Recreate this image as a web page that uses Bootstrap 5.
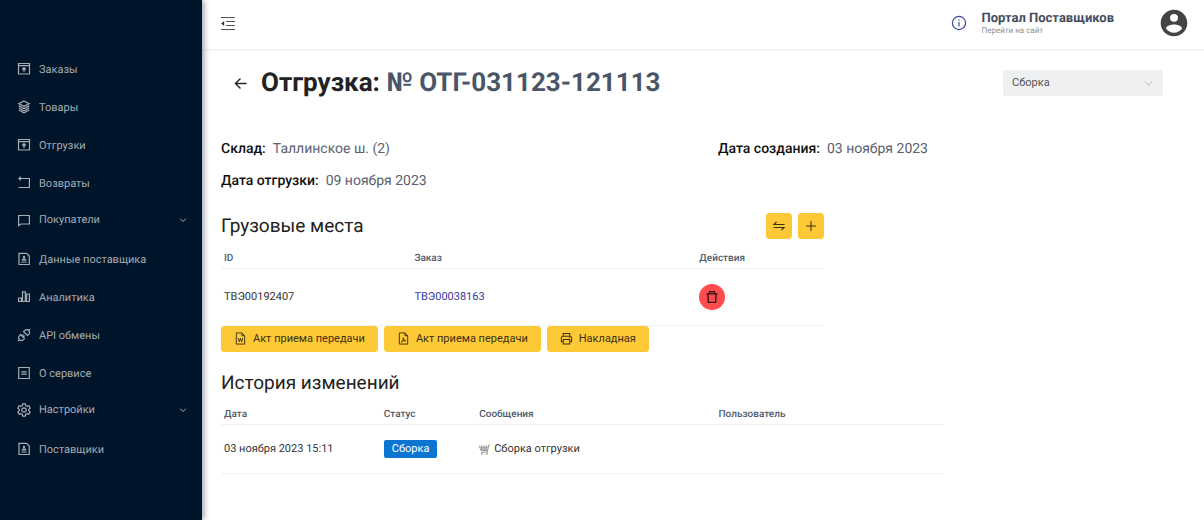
<!DOCTYPE html>
<html lang="ru">
<head>
<meta charset="utf-8">
<meta name="viewport" content="width=device-width, initial-scale=1">
<title>Отгрузка № ОТГ-031123-121113</title>
<link href="https://cdn.jsdelivr.net/npm/bootstrap@5.3.0/dist/css/bootstrap.min.css" rel="stylesheet">
<style>
  body { font-family: Roboto, "Liberation Sans", sans-serif; font-size: 11px; line-height: 20px; color: #2b2b2b; background: #fff; text-rendering: geometricPrecision; }
  svg { display: block; flex: none; fill: none; stroke: currentColor; }
  .sidebar { width: 202px; background: #001529; box-shadow: 2px 0 6px rgba(0, 21, 41, .4); padding-top: 51px; z-index: 1; }
  .menu-item { height: 38px; padding: 0 16px 0 17px; gap: 8px; color: #a6adb4; text-decoration: none; }
  .menu-item:hover { color: #fff; }
  .menu-item svg { margin-bottom: 3px; }
  .menu-group { padding-bottom: 4px; }
  .menu-group svg { margin-bottom: 0; }
  .topbar { height: 51px; padding: 0 16px 4px 18px; border-bottom: 2px solid #f3f3f5; }
  .topbar-account { gap: 14px; }
  .portal-name { font-size: 13px; line-height: 16px; font-weight: 700; color: #434e60; }
  .portal-link { font-size: 8px; line-height: 8px; color: #8c919c; text-decoration: none; }
  .content { padding: 0 19px 24px; }
  .title-row { padding: 14px 22px 0 13px; margin-bottom: 38px; gap: 14px; }
  .page-title { font-size: 26px; line-height: 36px; font-weight: 700; color: #222; }
  .page-title span { color: #4a5568; }
  .status-select { width: 160px; height: 26px; padding: 0 8px; font-size: 11px; line-height: 24px; color: #555; border: 1px solid #eff0f2; border-radius: 2px; background-color: #eff0f2; background-size: 9px; background-position: right 9px center; background-image: url("data:image/svg+xml,%3Csvg xmlns='http://www.w3.org/2000/svg' viewBox='0 0 10 10'%3E%3Cpath d='M1 2.5l4 5 4-5' fill='none' stroke='%23b5b6b9'/%3E%3C/svg%3E"); }
  .facts { font-size: 14px; line-height: 20px; color: #5a6270; }
  .facts dl { gap: 7px; }
  .facts dt { font-weight: 500; color: #111; }
  .cargo-head { padding-top: 22px; gap: 6px; }
  .history-block { padding-top: 18px; }
  .section-title { font-size: 19px; line-height: 26px; font-weight: 400; color: #222; }
  .actions { gap: 6px; }
  .btn-brand { --bs-btn-bg: #fdc936; --bs-btn-hover-bg: #f5bd20; --bs-btn-border-color: #fdc936; --bs-btn-color: #3c3013; height: 26px; border-radius: 3px; padding: 0 12px; font-size: 11px; line-height: 20px; gap: 6px; }
  .btn-square { width: 26px; padding: 0; }
  .btn-trash { width: 26px; height: 26px; background: #ff4d4f; color: #2b1010; padding: 0; }
  .data-table { table-layout: fixed; color: #333; font-size: 11px; line-height: 20px; --bs-table-color: #333; }
  .data-table > :not(caption) > * > * { padding: 0 3px; border-color: #f2f2f2; vertical-align: middle; }
  .data-table > thead > tr > th { height: 21px; padding-top: 3px; font-size: 10px; line-height: 14px; font-weight: 500; color: #4f5a6b; }
  .cargo td { height: 57px; }
  .history td { height: 49px; }
  .cargo a { color: #36379b; text-decoration: none; }
  .state-tag { background: #0b75d1; color: #fff; line-height: 18px; padding: 0 8px; border-radius: 2px; }
</style>
</head>
<body>
<svg class="d-none" aria-hidden="true">
  <symbol id="i-box" viewBox="0 0 14 14"><path d="M1.500 1.500h11v10.500h-11zM1.500 3.700h11M7 10V6M5.200 7.500L7 5.700l1.800 1.800" stroke-width="1.200"/></symbol>
  <symbol id="i-doc" viewBox="0 0 14 14"><path d="M2 1.400h7.600l2.700 2.700v8.400H2zM4.300 10h5.400M5.300 7.800c0-1.400 3.400-1.400 3.400 0z" stroke-width="1.200"/><circle cx="7" cy="5" r="1.200" fill="currentColor" stroke="none"/></symbol>
</svg>
<div class="d-flex min-vh-100">
  <nav class="sidebar flex-shrink-0">
    <a class="menu-item d-flex align-items-center" href="#"><svg width="14" height="14"><use href="#i-box"/></svg>Заказы</a>
    <a class="menu-item d-flex align-items-center" href="#"><svg width="14" height="14" viewBox="0 0 14 14" stroke-width="1.200"><path d="M7 1l5.200 2.700L7 6.400 1.800 3.700zM1.800 5.900L7 8.600l5.200-2.700M1.800 8L7 10.700 12.200 8M1.800 10L7 12.700l5.200-2.700"/></svg>Товары</a>
    <a class="menu-item d-flex align-items-center" href="#"><svg width="14" height="14"><use href="#i-box"/></svg>Отгрузки</a>
    <a class="menu-item d-flex align-items-center" href="#"><svg width="14" height="14" viewBox="0 0 14 14" stroke-width="1.200"><path d="M2 2.500h10.400v9H1.500M3.800.800L2 2.500l1.800 1.700"/></svg>Возвраты</a>
    <a class="menu-item menu-group d-flex align-items-center" href="#"><svg width="14" height="14" viewBox="0 0 14 14" stroke-width="1.200"><path d="M1.600 2.500h10.800v8.500H4l-2.400 1.600z"/></svg>Покупатели<svg class="ms-auto" width="6" height="6" viewBox="0 0 6 6"><path d="M0 1.500L3 4.500 6 1.500"/></svg></a>
    <a class="menu-item d-flex align-items-center" href="#"><svg width="14" height="14"><use href="#i-doc"/></svg>Данные поставщика</a>
    <a class="menu-item d-flex align-items-center" href="#"><svg width="14" height="14" viewBox="0 0 14 14" stroke-width="1.200"><path d="M1.600 8h2.800v3.500H1.600zM5.500 1.800h2.800v9.700H5.500zM9.600 4h2.800v7.500H9.600z"/></svg>Аналитика</a>
    <a class="menu-item d-flex align-items-center" href="#"><svg width="14" height="14" viewBox="0 0 14 14" stroke-width="1.200"><path d="M1 13l1.700-1.700M11.300 2.700L13 1M3.500 6.500l4 4-1.200 1.200a2.500 2.500 0 0 1-3.900-3.800zM6.500 3.500l4 4 1.200-1.200a2.500 2.500 0 0 0-3.900-3.800zM5 8l1.500-1.500M6.200 9.200l1.500-1.500"/></svg>API обмены</a>
    <a class="menu-item d-flex align-items-center" href="#"><svg width="14" height="14" viewBox="0 0 14 14" stroke-width="1.200"><path d="M1.700 1.500h10.600v11H1.700zM4.300 5.800h5.400M4.300 8.200h5.400"/></svg>О сервисе</a>
    <a class="menu-item menu-group d-flex align-items-center" href="#"><svg width="14" height="14" viewBox="0 0 14 14" stroke-width="1.200"><path d="M5.700.8h2.600l.4 1.800 1.300.8 1.800-.6 1.300 2.300-1.300 1.200v1.500l1.300 1.200-1.300 2.200-1.800-.5-1.300.7-.4 1.800H5.700l-.4-1.800-1.300-.7-1.800.5L.9 9l1.300-1.200V6.300L.9 5.100l1.300-2.300 1.800.6 1.300-.8z"/><circle cx="7" cy="7" r="2.200"/></svg>Настройки<svg class="ms-auto" width="6" height="6" viewBox="0 0 6 6"><path d="M0 1.500L3 4.500 6 1.500"/></svg></a>
    <a class="menu-item d-flex align-items-center" href="#"><svg width="14" height="14"><use href="#i-doc"/></svg>Поставщики</a>
  </nav>

  <div class="flex-grow-1">
    <header class="topbar d-flex align-items-center justify-content-between">
      <button class="btn p-0 border-0" type="button" aria-label="Свернуть меню"><svg width="16" height="16" viewBox="0 0 16 16" style="stroke:#555"><path d="M1 2.500h14M6 6.500h9M6 10.500h9M1 14.500h14"/><path d="M4.200 6v5L1.200 8.500z" fill="#333" stroke="none"/></svg></button>
      <div class="topbar-account d-flex align-items-center">
        <button class="btn p-0 border-0" type="button" aria-label="Информация"><svg width="16" height="16" viewBox="0 0 16 16" style="stroke:#40489a" stroke-width="1.200"><circle cx="8" cy="8" r="6.600"/><path d="M8 7v4.500M8 4.500v1.300"/></svg></button>
        <div class="d-flex flex-column me-4 pe-2">
          <span class="portal-name">Портал Поставщиков</span>
          <a class="portal-link" href="#">Перейти на сайт</a>
        </div>
        <button class="btn p-0 border-0 rounded-circle" type="button" aria-label="Профиль"><svg width="28" height="28" viewBox="0 0 24 24" style="stroke:none"><path fill="#444" d="M12 .6C5.700.6.6 5.700.6 12S5.700 23.400 12 23.400 23.400 18.300 23.400 12 18.300.6 12 .6zm0 3.600a3.400 3.400 0 1 1 0 6.800 3.400 3.400 0 0 1 0-6.800zm0 16.200c-2.900 0-5.400-1.500-6.900-3.700 0-2.300 4.600-3.500 6.900-3.500s6.900 1.200 6.900 3.500C17.400 18.900 14.900 20.400 12 20.400z"/></svg></button>
      </div>
    </header>

    <main class="content">
      <div class="title-row d-flex align-items-center">
        <a class="text-dark" href="#" aria-label="Назад"><svg width="13" height="13" viewBox="0 0 14 14" stroke-width="1.500"><path d="M13.500 7H1.500M7 1.500L1.500 7 7 12.500"/></svg></a>
        <h1 class="page-title mb-0">Отгрузка: <span>№ ОТГ-031123-121113</span></h1>
        <select class="status-select form-select ms-auto" aria-label="Статус"><option>Сборка</option></select>
      </div>

      <div class="row g-0">
        <div class="col-9">
          <div class="facts d-flex justify-content-between pe-3">
            <div>
              <dl class="d-flex mb-0"><dt>Склад:</dt><dd class="mb-0">Таллинское ш. (2)</dd></dl>
              <dl class="d-flex mb-0 mt-2 pt-1"><dt>Дата отгрузки:</dt><dd class="mb-0">09 ноября 2023</dd></dl>
            </div>
            <dl class="d-flex mb-0"><dt>Дата создания:</dt><dd class="mb-0">03 ноября 2023</dd></dl>
          </div>

          <div class="row g-0">
            <section class="col-10">
              <div class="cargo-head d-flex align-items-center mb-2">
                <h2 class="section-title mb-0 me-auto">Грузовые места</h2>
                <button class="btn btn-brand btn-square d-flex align-items-center justify-content-center" type="button" aria-label="Переместить"><svg width="14" height="14" viewBox="0 0 14 14" stroke-width="1.200"><path d="M12.500 5.500H2L4.500 2.800M1.500 8.500H12L9.500 11.200"/></svg></button>
                <button class="btn btn-brand btn-square d-flex align-items-center justify-content-center" type="button" aria-label="Добавить"><svg width="14" height="14" viewBox="0 0 14 14"><path d="M7 2v10M2 7h10"/></svg></button>
              </div>
              <table class="table data-table cargo mb-0">
                <colgroup><col style="width:31.6%"><col style="width:47.3%"><col></colgroup>
                <thead><tr><th>ID</th><th>Заказ</th><th>Действия</th></tr></thead>
                <tbody><tr><td>ТВЭ00192407</td><td><a href="#">ТВЭ00038163</a></td><td><button class="btn btn-trash rounded-circle border-0 d-flex align-items-center justify-content-center" type="button" aria-label="Удалить"><svg width="14" height="14" viewBox="0 0 14 14" stroke-width="1.300"><path d="M1.500 3.800h11M4.500 3.800V1.600h5v2.200M2.800 3.800l.6 8.600h7.200l.6-8.600"/></svg></button></td></tr></tbody>
              </table>
            </section>
          </div>

          <div class="actions d-flex">
            <button class="btn btn-brand d-flex align-items-center" type="button"><svg width="13" height="13" viewBox="0 0 14 14"><path d="M2.500 1h6l3 3v9h-9zM8.500 1v3h3M4.700 6.500l1 4L7 7l1.300 3.500 1-4"/></svg>Акт приема передачи</button>
            <button class="btn btn-brand d-flex align-items-center" type="button"><svg width="13" height="13" viewBox="0 0 14 14"><path d="M2.500 1h6l3 3v9h-9zM8.500 1v3h3M4.700 10.800C6.500 10 7 8 6.700 6.300 7 8.300 8 9.500 9.500 9.500 8 9 6 9.500 4.700 10.800z"/></svg>Акт приема передачи</button>
            <button class="btn btn-brand d-flex align-items-center" type="button"><svg width="13" height="13" viewBox="0 0 14 14" stroke-width="1.100"><path d="M3.500 4.500v-3h7v3M3.500 10.500h-2v-4q0-2 2-2h7q2 0 2 2v4h-2M3.500 8h7v5h-7zM9.500 6.200h1"/></svg>Накладная</button>
          </div>

          <section class="history-block">
            <h2 class="section-title mb-2">История изменений</h2>
            <table class="table data-table history mb-0">
              <colgroup><col style="width:22.1%"><col style="width:13.2%"><col style="width:33.1%"><col></colgroup>
              <thead><tr><th>Дата</th><th>Статус</th><th>Сообщения</th><th>Пользователь</th></tr></thead>
              <tbody><tr><td>03 ноября 2023 15:11</td><td><span class="state-tag d-inline-block">Сборка</span></td><td><span class="d-flex align-items-center"><svg class="me-1" width="11" height="11" viewBox="0 0 11 11" style="stroke:#999"><path d="M0 1.500l2 5h6.500L10 .8h1M.8 3.200h8.200M1.500 5h7M2.800 1.500v5M5 1.500v5M7.200 1.500v5M8.500 6.500v1.700H2"/><circle cx="3" cy="9.800" r=".6"/><circle cx="8" cy="9.800" r=".6"/></svg>Сборка отгрузки</span></td><td></td></tr></tbody>
            </table>
          </section>
        </div>
      </div>
    </main>
  </div>
</div>
<script src="https://cdn.jsdelivr.net/npm/bootstrap@5.3.0/dist/js/bootstrap.bundle.min.js"></script>
</body>
</html>
